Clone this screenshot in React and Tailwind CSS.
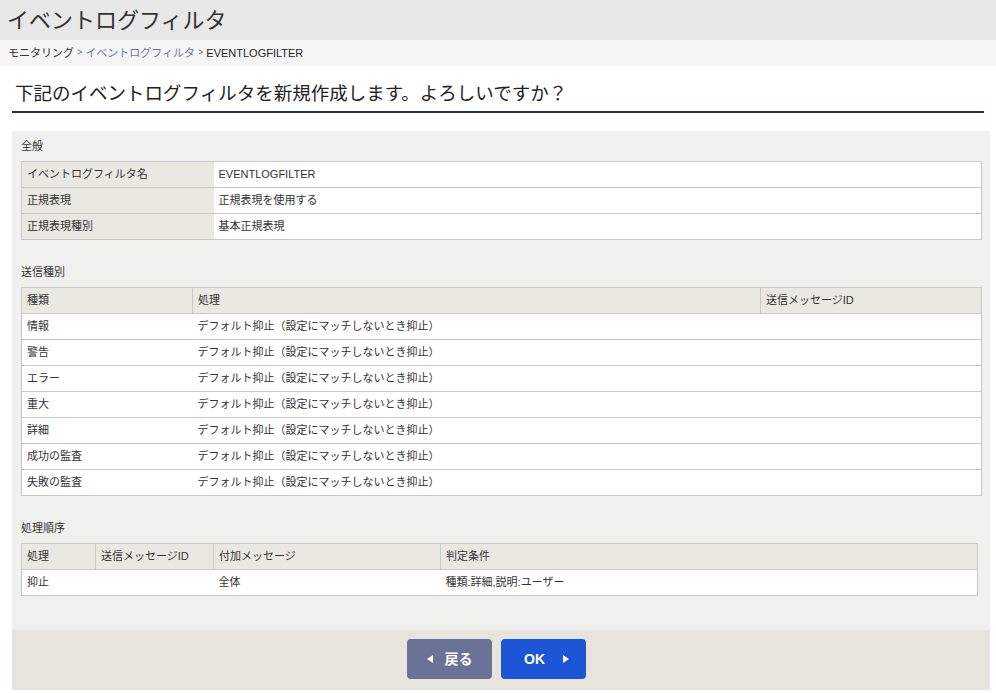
const FONT = { fontFamily: '"Liberation Sans", "Noto Sans CJK JP", sans-serif' };

const SEND_ROWS = ["情報", "警告", "エラー", "重大", "詳細", "成功の監査", "失敗の監査"];
const DEFAULT_ACTION = "デフォルト抑止（設定にマッチしないとき抑止）";

function SectionLabel({ children, first }) {
  return (
    <div className={`${first ? "pt-[8px]" : "pt-[25px]"} pb-[8px] text-[11px] leading-[14px] text-[#333]`}>
      {children}
    </div>
  );
}

const th = "h-[26px] border border-[#c8c8c8] bg-[#e9e9e1] px-[5px] text-left font-normal";
const td = "h-[26px] border-y border-[#c8c8c8] bg-white px-[5px]";
const label = "h-[26px] border-y border-[#c8c8c8] bg-[#e9e9e1] px-[5px]";
const table = "border-collapse border border-[#c8c8c8]";

export default function App() {
  return (
    <div className="min-h-screen w-[996px] bg-white text-[#333]" style={FONT}>
      {/* Title bar */}
      <div className="flex h-[40px] items-center bg-[#e8e8e8] px-[7px] text-[22px] text-[#333]">
        イベントログフィルタ
      </div>

      {/* Breadcrumb */}
      <div className="flex h-[26px] items-center gap-[3px] bg-[#f5f5f5] px-[8px] text-[11px]">
        <span>モニタリング</span>
        <span className="text-[9px] text-[#666]">&gt;</span>
        <span className="text-[#6b7a99]">イベントログフィルタ</span>
        <span className="text-[9px] text-[#666]">&gt;</span>
        <span className="text-[#222]">EVENTLOGFILTER</span>
      </div>

      {/* Heading */}
      <div className="mx-[12px] mt-[15px] border-b-2 border-[#1f2f55] pb-[4px] pl-[3px] text-[18.5px] leading-[26px] text-[#222]">
        下記のイベントログフィルタを新規作成します。よろしいですか？
      </div>

      {/* Panel */}
      <div className="mx-[12px] mt-[18px] w-[978px] bg-[#f0f0ef] pl-[9px] pr-[8px] pb-[34px] text-[11px]">
        <SectionLabel first>全般</SectionLabel>
        <table className={`w-full ${table}`}>
          <tbody>
            <tr>
              <td className={`${label} w-[192px]`}>イベントログフィルタ名</td>
              <td className={td}>EVENTLOGFILTER</td>
            </tr>
            <tr>
              <td className={label}>正規表現</td>
              <td className={td}>正規表現を使用する</td>
            </tr>
            <tr>
              <td className={label}>正規表現種別</td>
              <td className={td}>基本正規表現</td>
            </tr>
          </tbody>
        </table>

        <SectionLabel>送信種別</SectionLabel>
        <table className={`w-full ${table}`}>
          <thead>
            <tr>
              <th className={`${th} w-[171px]`}>種類</th>
              <th className={`${th} w-[568px]`}>処理</th>
              <th className={th}>送信メッセージID</th>
            </tr>
          </thead>
          <tbody>
            {SEND_ROWS.map((r) => (
              <tr key={r}>
                <td className={td}>{r}</td>
                <td className={td}>{DEFAULT_ACTION}</td>
                <td className={td}></td>
              </tr>
            ))}
          </tbody>
        </table>

        <SectionLabel>処理順序</SectionLabel>
        <table className={`w-[957px] ${table}`}>
          <thead>
            <tr>
              <th className={`${th} w-[74px]`}>処理</th>
              <th className={`${th} w-[118px]`}>送信メッセージID</th>
              <th className={`${th} w-[227px]`}>付加メッセージ</th>
              <th className={th}>判定条件</th>
            </tr>
          </thead>
          <tbody>
            <tr>
              <td className={td}>抑止</td>
              <td className={td}></td>
              <td className={td}>全体</td>
              <td className={td}>種類:詳細,説明:ユーザー</td>
            </tr>
          </tbody>
        </table>
      </div>

      {/* Footer buttons */}
      <div className="mx-[12px] flex h-[60px] w-[978px] items-start justify-center gap-[9px] bg-[#e7e3dd] pt-[9px] pr-[9px]">
        <button className="flex h-[40px] w-[85px] items-center justify-center gap-[12px] rounded-[4px] bg-[#6b7297] text-[14px] font-bold text-white">
          <svg width="6" height="8" viewBox="0 0 6 8"><path d="M6 0 L0 4 L6 8 Z" fill="white" /></svg>
          <span>戻る</span>
        </button>
        <button className="flex h-[40px] w-[85px] items-center justify-center gap-[18px] rounded-[4px] bg-[#1c56d6] pl-[6px] text-[14px] font-bold text-white">
          <span>OK</span>
          <svg width="6" height="8" viewBox="0 0 6 8"><path d="M0 0 L6 4 L0 8 Z" fill="white" /></svg>
        </button>
      </div>
    </div>
  );
}
